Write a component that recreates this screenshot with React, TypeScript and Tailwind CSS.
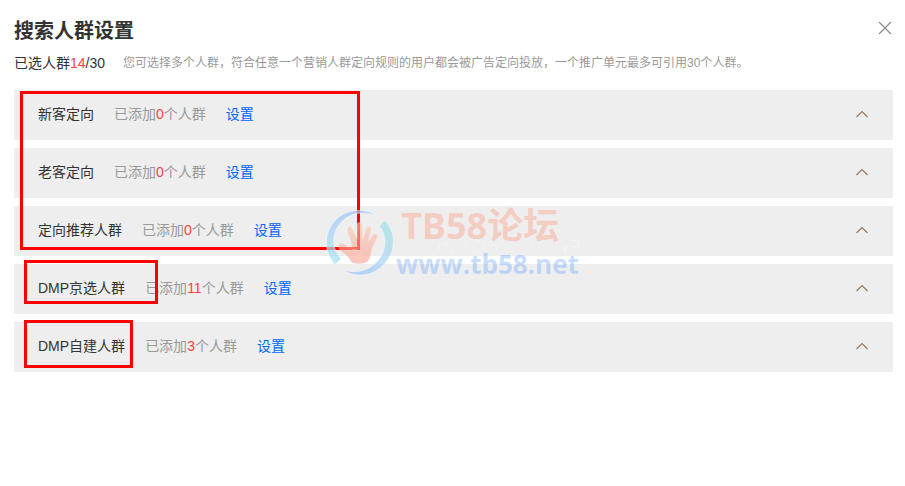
import { useState } from "react";

type Audience = { id: string; name: string; count: number };

const MAX_AUDIENCES = 30;

const audiences: Audience[] = [
  { id: "new", name: "新客定向", count: 0 },
  { id: "returning", name: "老客定向", count: 0 },
  { id: "recommended", name: "定向推荐人群", count: 0 },
  { id: "dmp-picked", name: "DMP京选人群", count: 11 },
  { id: "dmp-custom", name: "DMP自建人群", count: 3 },
];

function CloseIcon() {
  return (
    <svg viewBox="0 0 14 14" className="h-3.5 w-3.5" fill="none" stroke="#8c8c8c" strokeWidth="1.2" aria-hidden="true">
      <path d="M1 1l12 12M13 1L1 13" />
    </svg>
  );
}

function ChevronUp() {
  return (
    <svg viewBox="0 0 14 8" className="h-2 w-3.5" fill="none" stroke="#94795f" strokeWidth="1.2" aria-hidden="true">
      <path d="M1.5 7L7 1.5 12.5 7" />
    </svg>
  );
}

function AudienceRow({ audience }: { audience: Audience }) {
  const [open, setOpen] = useState(false);

  return (
    <li className="flex h-[50px] items-center gap-5 bg-[#eee] px-6 pb-0.5 text-sm">
      <span className="text-[#333]">{audience.name}</span>
      <span className="text-[#999]">
        已添加<span className="text-[#ff4040]">{audience.count}</span>个人群
      </span>
      <a href={`#${audience.id}`} className="text-[#0066ff]">
        设置
      </a>
      <button
        type="button"
        aria-label={audience.name}
        aria-expanded={open}
        onClick={() => setOpen(!open)}
        className="ml-auto"
      >
        <ChevronUp />
      </button>
    </li>
  );
}

function Watermark() {
  return (
    <div className="pointer-events-none absolute top-[110px] left-[306px] flex">
      <svg viewBox="0 0 240 240" className="h-20 w-20" aria-hidden="true">
        <defs>
          <linearGradient id="ringLeft" x1="1" y1="0" x2="0" y2="1">
            <stop offset="0" stopColor="#8fb8fb" />
            <stop offset=".6" stopColor="#a6cef8" />
            <stop offset="1" stopColor="#a0eaea" />
          </linearGradient>
          <linearGradient id="ringRight" x1="1" y1="0" x2="0" y2="1">
            <stop offset="0" stopColor="#9de4e0" />
            <stop offset=".5" stopColor="#a9d4f6" />
            <stop offset="1" stopColor="#92b8fa" />
          </linearGradient>
          <linearGradient id="palm" x1="0" y1="0" x2="0" y2="1">
            <stop offset="0" stopColor="#fcc8ae" />
            <stop offset="1" stopColor="#fb9c92" />
          </linearGradient>
        </defs>
        <g stroke="#fff" strokeOpacity=".6" strokeWidth="2" fillOpacity=".7">
          <path
            fill="url(#ringLeft)"
            d="M172 47C125 20 66 28 35 75C10 114 15 160 45 194L63 176C35 145 34 105 57 74C84 38 128 31 172 47Z"
          />
          <path
            fill="url(#ringRight)"
            d="M194 61C226 93 228 145 202 181C171 226 117 238 67 209C113 224 151 211 177 178C200 148 202 109 178 78Z"
          />
        </g>
        <path
          fill="url(#palm)"
          fillOpacity=".6"
          stroke="#f8e8e0"
          strokeOpacity=".6"
          strokeWidth="2"
          d="M95 187C88 174 80 165 66 156C59 149 54 140 58 131C66 126 78 138 90 144C95 141 96 136 94 128L82 92C79 78 93 76 97 86L111 116L111 74C113 65 126 66 127 75L128 118L139 86C144 75 156 81 153 91L145 124L159 104C168 97 177 105 170 116L157 142C152 158 153 175 141 186C127 193 108 193 95 187Z"
        />
        <path
          fill="none"
          stroke="#f7d9a8"
          strokeWidth="2"
          d="M94 150C113 146 123 156 124 170C124 179 120 185 116 188"
        />
        <path fill="none" stroke="#fafafa" strokeWidth="3" d="M81 98C76 92 77 85 83 82M99 82C98 73 103 69 110 72" />
      </svg>
      <div className="pt-0.5 font-['Open_Sans','Noto_Sans_CJK_SC',sans-serif] font-bold whitespace-nowrap">
        <p className="pl-px text-[36px] leading-[48px] text-[#ff8c70]/35">TB58论坛</p>
        <p className="-ml-1 text-[26px] leading-[28px] text-[#60a0ff]/35">www.tb58.net</p>
      </div>
      {/* Leftover white specks between the two lines */}
      <svg
        viewBox="0 0 150 16"
        className="absolute top-[40px] left-[116px] h-4 w-[150px]"
        fill="none"
        stroke="#fff"
        strokeOpacity=".4"
        aria-hidden="true"
      >
        <path d="M3 3v8M9 1v4h5M16 9v4h4M25 3h5v7M38 1h6M38 7v5h5M48 2v9M54 5h6v6M66 1v4M97 1v4M120 1v5" />
        <path d="M134.500 .5h8v6h-8M128.500 13v-6h5M128.500 10h3" />
      </svg>
    </div>
  );
}

export default function App() {
  const selected = audiences.reduce((sum, a) => sum + a.count, 0);

  return (
    <main className="min-h-screen bg-white pt-4 pr-3 pl-3.5 font-['Liberation_Sans','Noto_Sans_CJK_SC',sans-serif]">
      <header className="flex items-start justify-between">
        <h1 className="text-xl leading-[30px] font-bold text-[#333]">搜索人群设置</h1>
        <button type="button" aria-label="关闭" className="mt-1 p-px">
          <CloseIcon />
        </button>
      </header>

      <div className="mt-1.5 flex items-center gap-[18px] whitespace-nowrap">
        <p className="text-sm leading-[22px] text-[#333]">
          已选人群<span className="text-[#ff4040]">{selected}</span>/{MAX_AUDIENCES}
        </p>
        <p className="text-xs text-[#999]">
          您可选择多个人群，符合任意一个营销人群定向规则的用户都会被广告定向投放，一个推广单元最多可引用30个人群。
        </p>
      </div>

      <div className="relative mt-4">
        <ul className="flex flex-col gap-2">
          {audiences.map((audience) => (
            <AudienceRow key={audience.id} audience={audience} />
          ))}
        </ul>

        {/* Highlight frames over the rows */}
        <div className="pointer-events-none absolute top-px left-1.5 h-[159px] w-[340px] border-3 border-[#f00]" />
        <div className="pointer-events-none absolute top-[170px] left-2.5 h-11 w-[134px] border-3 border-[#f00]" />
        <div className="pointer-events-none absolute top-[230px] left-2.5 h-12 w-[109px] border-3 border-[#f00]" />

        <Watermark />
      </div>
    </main>
  );
}
